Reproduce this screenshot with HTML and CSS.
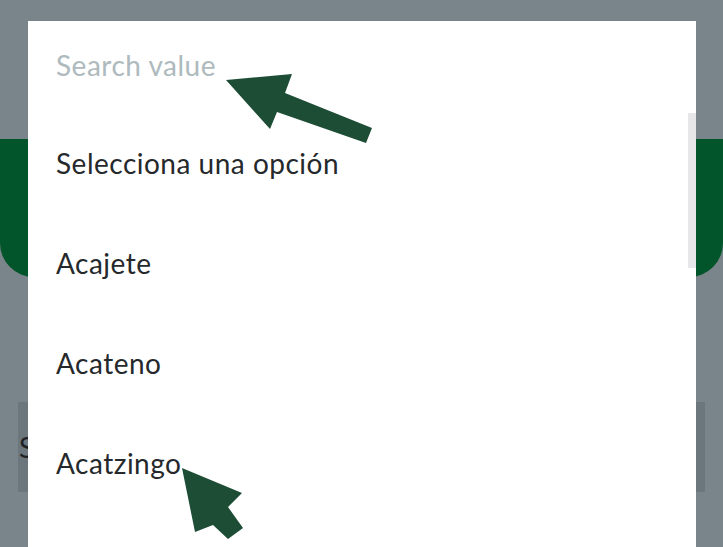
FILE: index.html
```html
<!DOCTYPE html>
<html lang="es">
<head>
<meta charset="utf-8">
<title>Selector</title>
<link rel="stylesheet" href="styles.css">
</head>
<body>
<div class="app">
  <div class="app-top"></div>
  <div class="app-header"></div>
  <div class="app-body">
    <div class="app-field">S</div>
  </div>
</div>

<div class="modal">
  <div class="search">Search value</div>
  <div class="list">
    <div class="option">Selecciona una opción</div>
    <div class="option">Acajete</div>
    <div class="option">Acateno</div>
    <div class="option">Acatzingo</div>
    <div class="scroll-thumb"></div>
  </div>
</div>

<svg class="arrows" width="723" height="547" viewBox="0 0 723 547" aria-hidden="true">
  <polygon points="226,80 292,74 285,93 372,128 366,143 277,112 270,129"/>
  <polygon points="182,468 242,493 228,507 243,528 228,539 213,525 195,532"/>
</svg>
</body>
</html>
```

FILE: styles.css
```css
* { box-sizing: border-box; }
html, body {
  margin: 0;
  padding: 0;
  width: 723px;
  height: 547px;
  overflow: hidden;
}
body {
  background: #7a858b;
  font-family: Lato, "Open Sans", "DejaVu Sans", sans-serif;
  position: relative;
}
.app {
  display: flex;
  flex-direction: column;
}
.app-top {
  height: 139px;
}
.app-header {
  height: 138px;
  background: #02552a;
  border-radius: 0 0 34px 34px;
}
.app-body {
  padding: 125px 18px 0 18px;
}
.app-field {
  height: 90px;
  background: #6b777c;
  color: #1f2326;
  font-size: 28px;
  display: flex;
  align-items: center;
  padding-left: 1px;
  white-space: nowrap;
  overflow: hidden;
}
.modal {
  position: absolute;
  left: 28px;
  top: 21px;
  width: 668px;
  bottom: 0;
  background: #ffffff;
  display: flex;
  flex-direction: column;
}
.search {
  height: 92px;
  padding: 27px 0 0 28px;
  font-size: 28px;
  letter-spacing: 0.5px;
  line-height: 34px;
  color: #aebabd;
}
.list {
  position: relative;
  display: flex;
  flex-direction: column;
}
.option {
  height: 100px;
  display: flex;
  align-items: center;
  padding-left: 28px;
  font-size: 28px;
  letter-spacing: 0.5px;
  color: #26292c;
}
.scroll-thumb {
  position: absolute;
  right: 0;
  top: 0;
  width: 8px;
  height: 155px;
  background: #e7e7e9;
}
.arrows {
  position: absolute;
  left: 0;
  top: 0;
  fill: #1e4d36;
}
```
